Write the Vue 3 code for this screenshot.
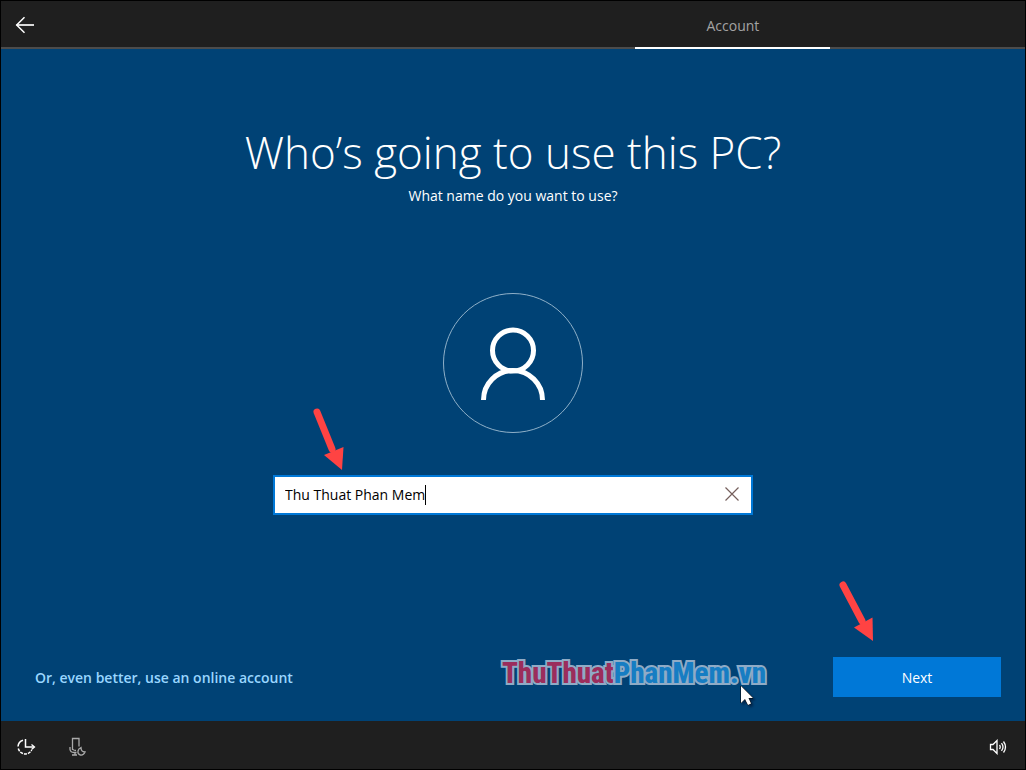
<script setup>
import { ref } from 'vue'

const name = ref('Thu Thuat Phan Mem')
const field = ref(null)

function clearName() {
  name.value = ''
  field.value?.focus()
}
</script>

<template>
  <div class="setup">
    <header class="topbar">
      <button class="icon-button back" type="button" aria-label="Back">
        <svg width="20" height="18" viewBox="0 0 20 18" fill="none" stroke="#fff">
          <path d="M1.5 9H19" stroke="#d8d8d8" stroke-width="2" />
          <path d="M9.500 1.200 1.700 9l7.800 7.800" stroke-width="1.500" />
        </svg>
      </button>
      <div class="step">Account</div>
    </header>

    <main class="stage">
      <h1>Who’s going to use this PC?</h1>
      <label class="question" for="user-name">What name do you want to use?</label>

      <div class="avatar">
        <svg width="140" height="140" viewBox="0 0 140 140" fill="none" stroke="#fff">
          <circle cx="70" cy="70" r="69.5" stroke="#8fb0c8" />
          <circle cx="70" cy="57.5" r="20.5" stroke-width="5" />
          <path d="M40.5 107a29.5 29.5 0 0 1 59 0" stroke-width="5" />
        </svg>
      </div>

      <div class="field">
        <input id="user-name" ref="field" v-model="name" type="text" autocomplete="off" spellcheck="false" />
        <span class="caret"></span>
        <button class="icon-button clear" type="button" aria-label="Clear" @click="clearName">
          <svg width="16" height="16" viewBox="0 0 16 16" fill="none" stroke="#755f5c" stroke-width="1.2">
            <path d="M1.500 1.500l13 13M14.500 1.500l-13 13" />
          </svg>
        </button>
        <svg class="pointer field-pointer" width="40" height="70" viewBox="0 0 40 70">
          <path d="M7 7 22 44" stroke="#ff4343" stroke-width="7" stroke-linecap="round" />
          <path d="M14 50 33.5 42 32 65Z" fill="#ff4343" />
        </svg>
      </div>

      <div class="actions">
        <a class="online" href="#">Or, even better, use an online account</a>
        <div class="brand">
          <span class="brand-first">ThuThuat</span><span class="brand-second">PhanMem.vn</span>
          <svg class="cursor" width="16" height="22" viewBox="0 0 16 22">
            <path d="M1 1v17l4-4 3 6 3-1.500-2.500-5.500H13Z" fill="#fff" stroke="#000" />
          </svg>
        </div>
        <div class="next-wrap">
          <button class="next" type="button">Next</button>
          <svg class="pointer next-pointer" width="44" height="68" viewBox="0 0 44 68">
            <path d="M8 8 27 44" stroke="#ff4343" stroke-width="7" stroke-linecap="round" />
            <path d="M19 50.500 37.500 40.500 38 64Z" fill="#ff4343" />
          </svg>
        </div>
      </div>
    </main>

    <footer class="bottombar">
      <button class="icon-button" type="button" aria-label="Ease of access">
        <svg width="20" height="18" viewBox="0 0 20 18" fill="none" stroke="#fff" stroke-width="1.500">
          <path d="M9.500 1v8H18" />
          <path d="M15.500 6.500 18.500 9l-3 2.500" stroke-width="1.300" />
          <path d="M7 2.200A7.200 7.200 0 0 0 2 8.500" />
          <path d="M2.300 10.500A7.200 7.200 0 0 0 15.700 12" stroke-dasharray="3 1" />
        </svg>
      </button>
      <button class="icon-button mic" type="button" aria-label="Microphone">
        <svg width="18" height="20" viewBox="0 0 18 20" fill="none" stroke="#aaa" stroke-width="1.300">
          <path d="M4.500 13V1.500h6.500V9.500M4.500 12q1 1.500 3.500 1.500" />
          <path d="M2 10v2.500q.5 3 4 3h2.500M7 15.500V18M4 18h5" />
          <path d="M13 10.500q0 4.500 4 4.500-1.500 3.500-4.500 3-3-.8-2.500-4 .5-2.500 3-3.500Z" />
        </svg>
      </button>
      <button class="icon-button volume" type="button" aria-label="Volume">
        <svg width="18" height="16" viewBox="0 0 18 16" fill="none" stroke="#fff" stroke-width="1.300">
          <path d="M1.500 5.500h2.500l4-4v13l-4-4H1.500Z" />
          <path d="M10.500 6q1.500 2 0 4M12.500 4.200q3 3.800 0 7.600M14.500 2.500q4 5.500 0 11" />
        </svg>
      </button>
    </footer>
  </div>
</template>

<style>
body {
  margin: 0;
  background: #000;
}
</style>

<style scoped>
.setup {
  box-sizing: border-box;
  min-height: 100vh;
  display: flex;
  flex-direction: column;
  border: 1px solid #000;
  background: #004275;
  color: #fff;
  font-family: "Open Sans", "Noto Sans", sans-serif;
  font-size: 14px;
  line-height: 20px;
}

button,
input {
  font: inherit;
  color: inherit;
  border: 0;
  padding: 0;
  margin: 0;
  background: none;
}

svg {
  display: block;
}

.icon-button {
  display: flex;
  align-items: center;
  justify-content: center;
  width: 20px;
  height: 20px;
}

.topbar {
  display: flex;
  align-items: center;
  box-sizing: border-box;
  height: 48px;
  padding-top: 2px;
  padding-right: 19%;
  background: #1f1f1f;
  border-bottom: 2px solid #4c4c4c;
}

.back {
  margin-left: 14px;
}

.step {
  align-self: stretch;
  display: flex;
  align-items: center;
  justify-content: center;
  width: 195px;
  margin-left: auto;
  margin-bottom: -2px;
  padding-top: 2px;
  border-bottom: 2px solid #fff;
  color: #a3a3a3;
}

.stage {
  flex: 1;
  display: flex;
  flex-direction: column;
  align-items: center;
  padding: 71px 24px 24px;
}

h1 {
  margin: 0;
  font-size: 44px;
  line-height: 64px;
  font-weight: 300;
  text-align: center;
}

.question {
  margin-top: 2px;
}

.avatar {
  margin-top: 87px;
}

.field {
  position: relative;
  box-sizing: border-box;
  display: flex;
  align-items: center;
  width: 480px;
  max-width: 100%;
  height: 40px;
  margin-top: 42px;
  padding: 0 9px 0 10px;
  border: 2px solid #0078d7;
  background: #fff;
  color: #000;
}

.field input {
  field-sizing: content;
  min-width: 2px;
  max-width: 400px;
  outline: 0;
}

.caret {
  width: 1px;
  height: 20px;
  background: #000;
}

.clear {
  margin-left: auto;
  padding-bottom: 2px;
}

.pointer {
  position: absolute;
  overflow: visible;
  pointer-events: none;
}

.field-pointer {
  left: 35px;
  top: -72px;
}

.next-pointer {
  left: 2px;
  top: -80px;
}

.actions {
  align-self: stretch;
  display: flex;
  align-items: center;
  margin-top: auto;
  padding-left: 10px;
}

.online {
  flex: 1;
  padding-top: 2px;
  color: #99d6ff;
  font-weight: 600;
  text-decoration: none;
}

.brand {
  position: relative;
  margin-right: 67px;
  padding-bottom: 8px;
  font-family: "Liberation Sans Narrow", "Roboto Condensed", "Open Sans Condensed", "Liberation Sans", sans-serif;
  font-size: 29px;
  line-height: 32px;
  font-weight: 800;
  -webkit-text-stroke: 4px #8fabc6;
  paint-order: stroke fill;
}

.brand-first {
  color: #9b2d5c;
}

.brand-second {
  color: #167dc3;
}

.cursor {
  position: absolute;
  right: 10px;
  bottom: -10px;
  filter: drop-shadow(2px 2px 1px #00254a);
}

.next-wrap {
  position: relative;
}

.next {
  width: 168px;
  height: 40px;
  padding-top: 2px;
  background: #0078d7;
}

.bottombar {
  display: flex;
  align-items: center;
  height: 48px;
  padding: 4px 17px 0 15px;
  box-sizing: border-box;
  background: #1f1f1f;
}

.mic {
  margin-left: 31px;
}

.volume {
  margin-left: auto;
}
</style>
